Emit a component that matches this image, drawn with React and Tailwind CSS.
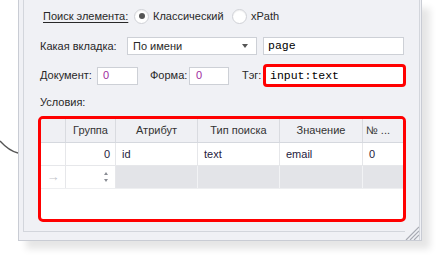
import React from 'react';

const cols = ['w-[25px]', 'w-[50px]', 'w-[82px]', 'w-[82px]', 'w-[83px]', 'flex-1'];

function Radio({ checked }) {
  return (
    <span className="flex h-[15px] w-[15px] shrink-0 items-center justify-center rounded-full border border-[#cfd1d6] bg-white shadow-[inset_0_1px_1px_rgba(0,0,0,0.06)]">
      {checked && <span className="h-[6px] w-[6px] rounded-full bg-[#555]" />}
    </span>
  );
}

function Input({ w, children, className = '' }) {
  return (
    <div className={`flex h-[18px] shrink-0 items-center border border-[#cdd0d6] bg-white ${w} ${className}`}>
      {children}
    </div>
  );
}

function App() {
  const header = ['', 'Группа', 'Атрибут', 'Тип поиска', 'Значение', '№ ...'];
  const row = ['', '0', 'id', 'text', 'email', '0'];

  return (
    <div className="relative h-[259px] w-[445px] overflow-hidden whitespace-nowrap bg-white font-['Liberation_Sans',sans-serif] text-[11px] text-[#282828]">
      {/* линия связи за панелью */}
      <svg className="absolute left-0 top-[130px]" width="18" height="30">
        <path d="M0 11 Q 9 21 18 23" fill="none" stroke="#555" strokeWidth="1.4" />
      </svg>

      <div className="relative ml-[18px] flex h-[241px] w-[404px] border-x border-b border-[#c9ccd4] bg-[#f0f1f5] shadow-[8px_8px_7px_rgba(0,0,0,0.1)]">
        <div className="ml-[4px] h-[232px] w-[396px] border-l border-b border-[#d3d6dc]">
          {/* Поиск элемента */}
          <div className="mt-[8px] flex h-[16px] items-center pl-[19px]">
            <span className="w-[91px] shrink-0 underline underline-offset-2">Поиск элемента:</span>
            <div className="flex w-[98px] shrink-0 items-center">
              <Radio checked />
              <span className="ml-[4px]">Классический</span>
            </div>
            <div className="flex items-center">
              <Radio />
              <span className="ml-[4px]">xPath</span>
            </div>
          </div>

          {/* Какая вкладка */}
          <div className="mt-[13px] flex h-[18px] items-center pl-[16px]">
            <span className="w-[87px] shrink-0">Какая вкладка:</span>
            <Input w="w-[130px]" className="justify-between pl-[5px] pr-[8px]">
              <span>По имени</span>
              <span className="h-0 w-0 border-x-[3.5px] border-t-[4px] border-x-transparent border-t-[#555]" />
            </Input>
            <Input w="w-[141px]" className="ml-[6px] pl-[4px] font-['Liberation_Mono',monospace] text-[11.5px] text-[#000]">
              page
            </Input>
          </div>

          {/* Документ / Форма / Тэг */}
          <div className="mt-[9px] flex h-[23px] items-center pl-[16px]">
            <span className="w-[57px] shrink-0">Документ:</span>
            <Input w="w-[41px]" className="pl-[5px] text-[#a02aa0]">0</Input>
            <span className="ml-[12px] w-[39px] shrink-0">Форма:</span>
            <Input w="w-[40px]" className="pl-[6px] text-[#a02aa0]">0</Input>
            <span className="ml-[13px] w-[21px] shrink-0">Тэг:</span>
            <div className="flex h-[23px] w-[143px] shrink-0 items-center rounded-[4px] border-[3px] border-[#ff0000] bg-white pl-[4px] font-['Liberation_Mono',monospace] text-[11.5px] text-[#000]">
              input:text
            </div>
          </div>

          {/* Условия */}
          <div className="mt-[7px] flex h-[16px] items-center pl-[16px]">Условия:</div>

          <div className="ml-[14px] mt-[6px] flex h-[106px] w-[368px] flex-col overflow-hidden rounded-[5px] border-[3px] border-[#ff0000] bg-white">
            <div className="flex h-[24px] border-b border-[#d5d8de] bg-[#eff0f4] text-[#333]">
              {header.map((h, i) => (
                <div
                  key={i}
                  className={`flex items-center ${cols[i]} ${i < 5 ? 'justify-center border-r border-[#d9dbe0]' : 'pl-[3px]'}`}
                >
                  {h}
                </div>
              ))}
            </div>
            <div className="flex h-[23px] border-b border-[#e6e7ea] text-[#1f2240]">
              {row.map((v, i) => (
                <div
                  key={i}
                  className={`flex items-center ${cols[i]} ${i < 5 ? 'border-r border-[#e6e7ea]' : ''} ${i === 1 ? 'justify-end pr-[5px]' : 'pl-[6px]'} ${i === 5 ? 'pl-[5px]' : ''}`}
                >
                  {v}
                </div>
              ))}
            </div>
            <div className="flex h-[23px] border-b border-[#eeeff1]">
              <div className={`flex items-center justify-center border-r border-[#e6e7ea] text-[13px] text-[#c3c5ca] ${cols[0]}`}>→</div>
              <div className={`flex flex-col items-end justify-center gap-[4px] border-r border-[#e6e7ea] pr-[7px] ${cols[1]}`}>
                <span className="h-0 w-0 border-x-[2.5px] border-b-[3px] border-x-transparent border-b-[#8a8d95]" />
                <span className="h-0 w-0 border-x-[2.5px] border-t-[3px] border-x-transparent border-t-[#8a8d95]" />
              </div>
              <div className={`border-r border-[#f2f3f5] bg-[#e3e4e8] ${cols[2]}`} />
              <div className={`border-r border-[#f2f3f5] bg-[#e3e4e8] ${cols[3]}`} />
              <div className={`border-r border-[#f2f3f5] bg-[#e3e4e8] ${cols[4]}`} />
              <div className={`bg-[#e3e4e8] ${cols[5]}`} />
            </div>
          </div>
        </div>
        <div className="w-px bg-[#d3d6dc]" />

        {/* уголок изменения размера */}
        <svg className="absolute bottom-0 right-[2px] bg-[#f0f1f5]" width="14" height="14">
          <path d="M14 1 L1 14 M14 5 L5 14 M14 9 L9 14" stroke="#a8abb3" strokeWidth="1.2" />
        </svg>
      </div>
    </div>
  );
}

export default App;
